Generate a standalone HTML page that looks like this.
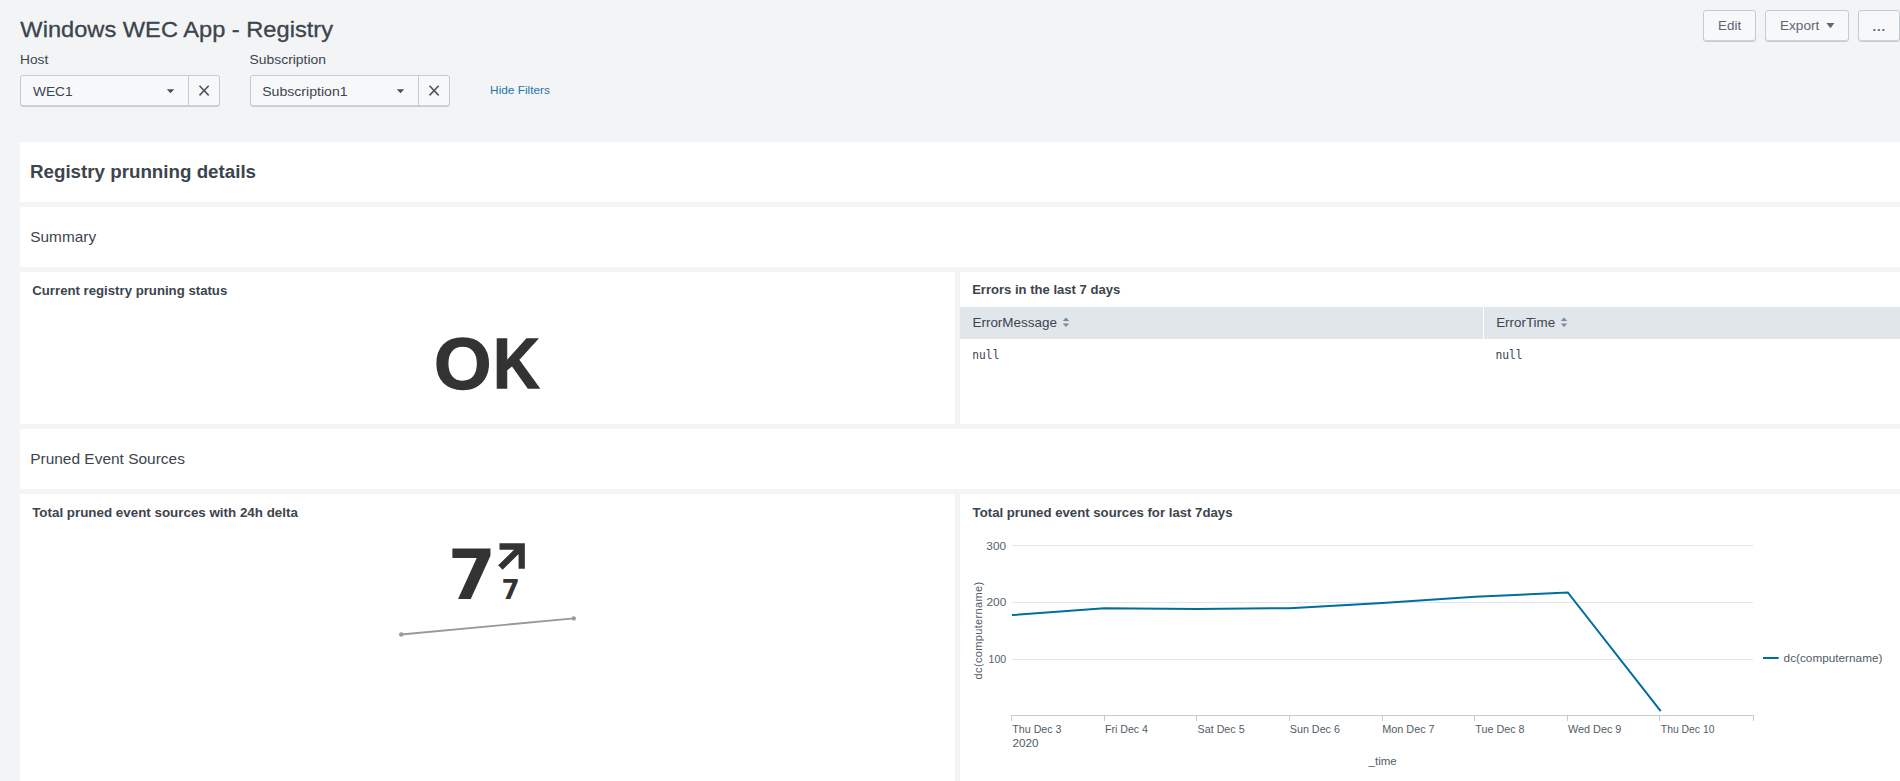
<!DOCTYPE html>
<html lang="en"><head><meta charset="utf-8"><title>Windows WEC App - Registry</title>
<style>
*{box-sizing:border-box;margin:0;padding:0}
html,body{width:1900px;height:781px;overflow:hidden;background:#f2f4f5;font-family:"Liberation Sans",Arial,sans-serif;color:#3c444d}
.p{position:absolute;background:#fff}
.t{position:absolute;display:block;white-space:nowrap;line-height:1;height:1em;transform-origin:0 0;text-decoration:none}
.btn{position:absolute;top:10px;height:32px;background:#f7f8fa;border:1px solid #c3cbd4;border-radius:3px;box-shadow:inset 0 -1px 0 #cdd4dc}
.sel{position:absolute;top:75px;height:32px;width:200px;background:#f7f8fa;border:1px solid #c3cbd4;border-radius:3px;box-shadow:inset 0 -1px 0 #cdd4dc}
.sel i{position:absolute;left:167px;top:0;bottom:0;width:1px;background:#c3cbd4}
svg{position:absolute;overflow:visible}
</style></head><body>
<div class="p" style="left:20px;top:142px;width:1880px;height:60px"></div>
<div class="p" style="left:20px;top:207px;width:1880px;height:60px"></div>
<div class="p" style="left:20px;top:272px;width:935px;height:152px"></div>
<div class="p" style="left:960px;top:272px;width:940px;height:152px"></div>
<div class="p" style="left:20px;top:429px;width:1880px;height:60px"></div>
<div class="p" style="left:20px;top:494px;width:935px;height:287px"></div>
<div class="p" style="left:960px;top:494px;width:940px;height:287px"></div>
<div style="position:absolute;left:960px;top:307px;width:523px;height:32px;background:#e1e6eb"></div>
<div style="position:absolute;left:1484px;top:307px;width:416px;height:32px;background:#e1e6eb"></div>
<div class="btn" style="left:1703px;width:53px"></div>
<div class="btn" style="left:1765px;width:84px"></div>
<div class="btn" style="left:1858px;width:42px"></div>
<div class="sel" style="left:20px"><i></i></div>
<div class="sel" style="left:250px"><i></i></div>
<svg width="1900" height="781" viewBox="0 0 1900 781" style="left:0;top:0">
<!-- select carets -->
<path d="M166.8 89.3h7.4l-3.7 4z" fill="#47515e"/>
<path d="M396.8 89.3h7.4l-3.7 4z" fill="#47515e"/>
<!-- clear X -->
<path d="M199.5 85.8l9.2 9.6M208.7 85.8l-9.2 9.6" stroke="#4a5461" stroke-width="1.55" fill="none"/>
<path d="M429.5 85.8l9.2 9.6M438.7 85.8l-9.2 9.6" stroke="#4a5461" stroke-width="1.55" fill="none"/>
<!-- export caret -->
<path d="M1826.4 23h8l-4 5.2z" fill="#5c6773"/>
<!-- sort icons -->
<path d="M1062.8 320.9l3.2-3.4 3.2 3.4z" fill="#7e8995"/><path d="M1062.8 323.4l3.2 3.7 3.2-3.7z" fill="#7e8995"/>
<path d="M1560.9 320.9l3.2-3.4 3.2 3.4z" fill="#7e8995"/><path d="M1560.9 323.4l3.2 3.7 3.2-3.7z" fill="#7e8995"/>
<!-- delta arrow -->
<path d="M499.5 546.5H521.7V568.7M521.7 546.5L500.4 567.6" stroke="#333" stroke-width="6.3" fill="none" stroke-linejoin="miter"/>
<!-- sparkline -->
<path d="M401.2 634.5L573.8 618.4" stroke="#999" stroke-width="1.9" fill="none"/>
<circle cx="401.2" cy="634.5" r="2.2" fill="#999"/><circle cx="573.8" cy="618.4" r="2.2" fill="#999"/>
<!-- chart -->
<g stroke="#e1e6eb" stroke-width="1" shape-rendering="crispEdges">
<path d="M1011.5 545.5H1753M1011.5 602.5H1753M1011.5 659.5H1753"/></g>
<g stroke="#c3cbd4" stroke-width="1" fill="none" shape-rendering="crispEdges">
<path d="M1011 715.5H1754"/>
<path d="M1011.5 715v6M1104.5 715v6M1196.5 715v6M1289.5 715v6M1382.5 715v6M1474.5 715v6M1567.5 715v6M1659.5 715v6M1753.5 715v6"/></g>
<path d="M1012 615.1L1104.3 608.2L1197 608.9L1289.7 608.2L1382.4 603L1475.1 596.8L1567.8 592.4L1660.7 711.1" stroke="#006d9c" stroke-width="2" fill="none" stroke-linejoin="miter"/>
<path d="M1763 658H1778.7" stroke="#006d9c" stroke-width="2"/>
<text transform="translate(982.2 630.6) rotate(-90)" text-anchor="middle" font-family='"Liberation Sans",Arial,sans-serif' font-size="11" fill="#525c67" textLength="97.6" lengthAdjust="spacing">dc(computername)</text>
</svg>
<h1 class="t" id="t_title" style="left:20px;top:19px;font-size:22.2px;font-weight:400;color:#3c444d;transform:translateX(0.33px) scaleX(1.0655);-webkit-text-stroke:0.3px #3c444d">Windows WEC App - Registry</h1>
<label class="t" id="t_host" style="left:20px;top:53px;font-size:13.4px;font-weight:400;color:#3c444d;transform:translateX(0.03px) scaleX(1.0232)">Host</label>
<label class="t" id="t_sub" style="left:249px;top:53px;font-size:13.4px;font-weight:400;color:#3c444d;transform:translateX(0.45px) scaleX(1.0393)">Subscription</label>
<div class="t" id="t_wec" style="left:32px;top:85px;font-size:13.6px;font-weight:400;color:#3c444d;transform:translateX(0.92px) scaleX(1.0102)">WEC1</div>
<div class="t" id="t_sub1" style="left:262px;top:85px;font-size:13.6px;font-weight:400;color:#3c444d;transform:translateX(0.13px) scaleX(1.0378)">Subscription1</div>
<a class="t" id="t_hide" style="left:490px;top:84px;font-size:11.6px;font-weight:400;color:#1f76ad;transform:translateX(0.09px) scaleX(1.0195)">Hide Filters</a>
<span class="t" id="t_edit" style="left:1718px;top:19px;font-size:13.4px;font-weight:400;color:#5c6773;transform:translateX(0.11px) scaleX(1.0000)">Edit</span>
<span class="t" id="t_export" style="left:1780px;top:19px;font-size:13.4px;font-weight:400;color:#5c6773;transform:translateX(0.02px) scaleX(1.0131)">Export</span>
<span class="t" id="t_dots" style="left:1872px;top:20px;font-size:13px;font-weight:700;color:#5c6773;transform:translateX(0.40px) scaleX(0.9948);letter-spacing:1px">...</span>
<h2 class="t" id="t_reg" style="left:29px;top:164px;font-size:17.5px;font-weight:700;color:#3c444d;transform:translateX(0.99px) scaleX(1.0712)">Registry prunning details</h2>
<h2 class="t" id="t_sum" style="left:30px;top:229px;font-size:15px;font-weight:400;color:#3c444d;transform:translateX(0.31px) scaleX(1.0247)">Summary</h2>
<h3 class="t" id="t_cur" style="left:32px;top:285px;font-size:12.6px;font-weight:700;color:#3c444d;transform:translateX(0.27px) scaleX(1.0476)">Current registry pruning status</h3>
<h3 class="t" id="t_err" style="left:972px;top:284px;font-size:12.6px;font-weight:700;color:#3c444d;transform:translateX(0.13px) scaleX(1.0370)">Errors in the last 7 days</h3>
<span class="t" id="t_em" style="left:972px;top:317px;font-size:12.8px;font-weight:400;color:#3c444d;transform:translateX(0.46px) scaleX(1.0510)">ErrorMessage</span>
<span class="t" id="t_et" style="left:1496px;top:317px;font-size:12.8px;font-weight:400;color:#3c444d;transform:translateX(0.16px) scaleX(1.0456)">ErrorTime</span>
<div class="t" id="t_n1" style="left:972px;top:349px;font-size:12.5px;font-weight:400;color:#3c444d;font-family:'DejaVu Sans Mono', 'Liberation Mono', monospace;transform:translateX(0.36px) scaleX(0.8977)">null</div>
<div class="t" id="t_n2" style="left:1495px;top:349px;font-size:12.5px;font-weight:400;color:#3c444d;font-family:'DejaVu Sans Mono', 'Liberation Mono', monospace;transform:translateX(0.38px) scaleX(0.9037)">null</div>
<h2 class="t" id="t_pes" style="left:30px;top:451px;font-size:15px;font-weight:400;color:#3c444d;transform:translateX(0.22px) scaleX(1.0306)">Pruned Event Sources</h2>
<h3 class="t" id="t_tp1" style="left:32px;top:507px;font-size:12.6px;font-weight:700;color:#3c444d;transform:translateX(0.16px) scaleX(1.0616)">Total pruned event sources with 24h delta</h3>
<h3 class="t" id="t_tp2" style="left:972px;top:507px;font-size:12.6px;font-weight:700;color:#3c444d;transform:translateX(0.61px) scaleX(1.0470)">Total pruned event sources for last 7days</h3>
<div class="t" id="t_big7" style="left:447px;top:541px;font-size:69.3px;font-weight:700;color:#333333;font-family:'DejaVu Sans', 'Liberation Sans', sans-serif;transform:translateX(0.70px) scaleX(1.0000)">7</div>
<div class="t" id="t_sm7" style="left:501px;top:577px;font-size:26.2px;font-weight:700;color:#333333;font-family:'DejaVu Sans', 'Liberation Sans', sans-serif;transform:translateX(0.40px) scaleX(1.0000)">7</div>
<div class="t" id="t_y300" style="left:986px;top:542px;font-size:10.2px;font-weight:400;color:#56606b;transform:translateX(0.37px) scaleX(1.1573)">300</div>
<div class="t" id="t_y200" style="left:986px;top:598px;font-size:10.2px;font-weight:400;color:#56606b;transform:translateX(0.45px) scaleX(1.1685)">200</div>
<div class="t" id="t_y100" style="left:988px;top:655px;font-size:10.2px;font-weight:400;color:#56606b;transform:translateX(0.62px) scaleX(1.0366)">100</div>
<div class="t" id="t_x0" style="left:1012px;top:724px;font-size:10.5px;font-weight:400;color:#525c67;transform:translateX(0.32px) scaleX(1.0144)">Thu Dec 3</div>
<div class="t" id="t_x0b" style="left:1012px;top:738px;font-size:10.5px;font-weight:400;color:#525c67;transform:translateX(0.52px) scaleX(1.1147)">2020</div>
<div class="t" id="t_x1" style="left:1104px;top:724px;font-size:10.5px;font-weight:400;color:#525c67;transform:translateX(0.93px) scaleX(1.0096)">Fri Dec 4</div>
<div class="t" id="t_x2" style="left:1197px;top:724px;font-size:10.5px;font-weight:400;color:#525c67;transform:translateX(0.61px) scaleX(1.0187)">Sat Dec 5</div>
<div class="t" id="t_x3" style="left:1289px;top:724px;font-size:10.5px;font-weight:400;color:#525c67;transform:translateX(0.76px) scaleX(1.0235)">Sun Dec 6</div>
<div class="t" id="t_x4" style="left:1382px;top:724px;font-size:10.5px;font-weight:400;color:#525c67;transform:translateX(0.23px) scaleX(1.0322)">Mon Dec 7</div>
<div class="t" id="t_x5" style="left:1475px;top:724px;font-size:10.5px;font-weight:400;color:#525c67;transform:translateX(0.28px) scaleX(1.0244)">Tue Dec 8</div>
<div class="t" id="t_x6" style="left:1567px;top:724px;font-size:10.5px;font-weight:400;color:#525c67;transform:translateX(0.95px) scaleX(1.0328)">Wed Dec 9</div>
<div class="t" id="t_x7" style="left:1660px;top:724px;font-size:10.5px;font-weight:400;color:#525c67;transform:translateX(0.79px) scaleX(0.9896)">Thu Dec 10</div>
<div class="t" id="t_time" style="left:1368px;top:756px;font-size:11px;font-weight:400;color:#525c67;transform:translateX(0.59px) scaleX(1.0468)">_time</div>
<div class="t" id="t_leg" style="left:1783px;top:653px;font-size:11px;font-weight:400;color:#525c67;transform:translateX(0.61px) scaleX(1.0702)">dc(computername)</div>
<div class="t" id="t_ok" style="left:434.4px;top:329.0px;font-size:71.5px;font-weight:700;color:#333;-webkit-text-stroke:1.3px #333"><span style="display:inline-block;transform:scaleX(1.033);transform-origin:0 0">O</span><span style="display:inline-block;transform:scale(0.905,0.975);transform-origin:0 48%;margin-left:3.0px">K</span></div>
</body></html>
